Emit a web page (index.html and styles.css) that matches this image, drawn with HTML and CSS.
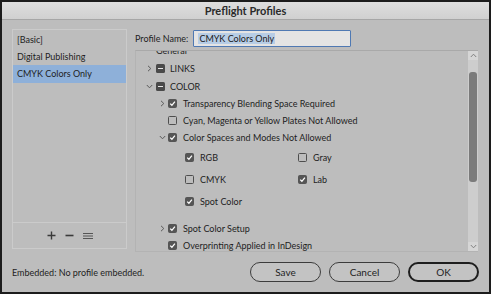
FILE: index.html
```html
<!DOCTYPE html>
<html>
<head>
<meta charset="utf-8">
<link rel="stylesheet" href="styles.css">
</head>
<body>
<div class="window">
  <div class="titlebar">Preflight Profiles</div>
  <div class="content">
    <div class="listpanel">
      <div class="items">
        <div class="item">[Basic]</div>
        <div class="item">Digital Publishing</div>
        <div class="item selected">CMYK Colors Only</div>
      </div>
      <div class="listtools">
        <svg width="9" height="9" viewBox="0 0 9 9"><path d="M4.5 0.5v8M0.5 4.5h8" stroke="#3a3a3a" stroke-width="1.4"/></svg>
        <svg width="9" height="9" viewBox="0 0 9 9"><path d="M0.5 4.5h8" stroke="#3a3a3a" stroke-width="1.6"/></svg>
        <svg width="10" height="9" viewBox="0 0 10 9"><path d="M0 2.5h10M0 5h10M0 7.5h10" stroke="#555" stroke-width="1"/></svg>
      </div>
    </div>
    <div class="rightcol">
      <div class="namerow">
        <span class="namelabel">Profile Name:</span>
        <div class="nameinput"><span class="sel">CMYK Colors Only</span></div>
      </div>
      <div class="tree">
        <div class="treeview">
          <div class="rows">
            <div class="row lv0 tall"><span class="chev"></span><span class="label">General</span></div>
            <div class="row lv0 tall"><span class="chev"><svg width="5" height="7" viewBox="0 0 5 7"><path d="M1 0.8l2.8 2.7L1 6.2" fill="none" stroke="#5a5a5a" stroke-width="1"/></svg></span><span class="cat"></span><span class="label">LINKS</span></div>
            <div class="row lv0 tall"><span class="chev"><svg width="7" height="5" viewBox="0 0 7 5"><path d="M0.8 1l2.7 2.8L6.2 1" fill="none" stroke="#5a5a5a" stroke-width="1"/></svg></span><span class="cat"></span><span class="label">COLOR</span></div>
            <div class="row lv1"><span class="chev"><svg width="5" height="7" viewBox="0 0 5 7"><path d="M1 0.8l2.8 2.7L1 6.2" fill="none" stroke="#5a5a5a" stroke-width="1"/></svg></span><span class="cb on"><svg width="9" height="9" viewBox="0 0 9 9"><path d="M2.2 4.6l1.7 1.7 3-3.6" fill="none" stroke="#fff" stroke-width="1.3"/></svg></span><span class="label">Transparency Blending Space Required</span></div>
            <div class="row lv1"><span class="chev"></span><span class="cb"></span><span class="label">Cyan, Magenta or Yellow Plates Not Allowed</span></div>
            <div class="row lv1"><span class="chev"><svg width="7" height="5" viewBox="0 0 7 5"><path d="M0.8 1l2.7 2.8L6.2 1" fill="none" stroke="#5a5a5a" stroke-width="1"/></svg></span><span class="cb on"><svg width="9" height="9" viewBox="0 0 9 9"><path d="M2.2 4.6l1.7 1.7 3-3.6" fill="none" stroke="#fff" stroke-width="1.3"/></svg></span><span class="label">Color Spaces and Modes Not Allowed</span></div>
            <div class="subgrid">
              <div class="opt"><span class="cb on"><svg width="9" height="9" viewBox="0 0 9 9"><path d="M2.2 4.6l1.7 1.7 3-3.6" fill="none" stroke="#fff" stroke-width="1.3"/></svg></span><span class="label">RGB</span></div>
              <div class="opt"><span class="cb"></span><span class="label">Gray</span></div>
              <div class="opt"><span class="cb"></span><span class="label">CMYK</span></div>
              <div class="opt"><span class="cb on"><svg width="9" height="9" viewBox="0 0 9 9"><path d="M2.2 4.6l1.7 1.7 3-3.6" fill="none" stroke="#fff" stroke-width="1.3"/></svg></span><span class="label">Lab</span></div>
              <div class="opt"><span class="cb on"><svg width="9" height="9" viewBox="0 0 9 9"><path d="M2.2 4.6l1.7 1.7 3-3.6" fill="none" stroke="#fff" stroke-width="1.3"/></svg></span><span class="label">Spot Color</span></div>
            </div>
            <div class="row lv1"><span class="chev"><svg width="5" height="7" viewBox="0 0 5 7"><path d="M1 0.8l2.8 2.7L1 6.2" fill="none" stroke="#5a5a5a" stroke-width="1"/></svg></span><span class="cb on"><svg width="9" height="9" viewBox="0 0 9 9"><path d="M2.2 4.6l1.7 1.7 3-3.6" fill="none" stroke="#fff" stroke-width="1.3"/></svg></span><span class="label">Spot Color Setup</span></div>
            <div class="row lv1"><span class="chev"></span><span class="cb on"><svg width="9" height="9" viewBox="0 0 9 9"><path d="M2.2 4.6l1.7 1.7 3-3.6" fill="none" stroke="#fff" stroke-width="1.3"/></svg></span><span class="label">Overprinting Applied in InDesign</span></div>
          </div>
        </div>
        <div class="scrollbar">
          <div class="sbtn"><svg width="7" height="5" viewBox="0 0 7 5"><path d="M0.8 4L3.5 1.2 6.2 4" fill="none" stroke="#777" stroke-width="0.9"/></svg></div>
          <div class="track"><div class="thumb"></div></div>
          <div class="sbtn"><svg width="7" height="5" viewBox="0 0 7 5"><path d="M0.8 1L3.5 3.8 6.2 1" fill="none" stroke="#777" stroke-width="0.9"/></svg></div>
        </div>
      </div>
    </div>
  </div>
  <div class="footer">
    <span class="embedded">Embedded: No profile embedded.</span>
    <div class="buttons">
      <button class="btn">Save</button>
      <button class="btn">Cancel</button>
      <button class="btn default">OK</button>
    </div>
  </div>
</div>
</body>
</html>
```
FILE: styles.css
```css
* { box-sizing: border-box; }
html, body { margin: 0; padding: 0; background: #2a2a2a; }
body { font-family: Lato, "Open Sans", sans-serif; font-size: 9px; color: #1e1e1e; }

.window {
  width: 491px;
  height: 294px;
  border: 2px solid #1c1c1c;
  background: #bdbdbd;
  display: flex;
  flex-direction: column;
  overflow: hidden;
}

.titlebar {
  height: 18px;
  flex: none;
  background: linear-gradient(#dedede, #d0d0d0);
  border-bottom: 1px solid #a6a6a6;
  text-align: center;
  font-weight: bold;
  font-size: 11px;
  line-height: 17px;
  color: #2a2a2a;
}

.content {
  display: flex;
  align-items: flex-start;
  gap: 8px;
  padding: 10px 11px 0 10px;
  height: 232px;
  flex: none;
}

.listpanel {
  width: 115px;
  height: 220px;
  border: 1px solid #cbcbcb;
  display: flex;
  flex-direction: column;
  margin-top: -1px;
}
.items { flex: 1; padding-top: 1px; }
.item {
  height: 17px;
  line-height: 17px;
  padding-left: 4px;
  white-space: nowrap;
}
.item.selected { background: #8eb0d9; height: 18px; line-height: 18px; }
.listtools {
  height: 26px;
  border-top: 1px solid #cbcbcb;
  display: flex;
  justify-content: center;
  align-items: center;
  gap: 9px;
  padding-bottom: 1px;
}

.rightcol {
  flex: 1;
  align-self: stretch;
  display: flex;
  flex-direction: column;
  gap: 3px;
}
.namerow {
  height: 17px;
  display: flex;
  align-items: center;
  gap: 5px;
}
.namelabel { white-space: nowrap; }
.nameinput {
  width: 158px;
  height: 17px;
  border: 1px solid #4f79b3;
  background: #e4e4e4;
  border-radius: 1px;
  padding: 2px 0 0 4px;
  line-height: 11px;
}
.sel { background: #b7cde6; color: #1a1a1a; padding: 0 1px; }

.tree {
  flex: 1;
  display: flex;
  border-top: 1px solid #a9a9a9;
  border-left: 1px solid #b3b3b3;
  border-bottom: 1px solid #b3b3b3;
  overflow: hidden;
}
.treeview { flex: 1; overflow: hidden; }
.rows { margin-top: -10px; }
.row {
  height: 17px;
  display: flex;
  align-items: center;
  white-space: nowrap;
}
.row.tall { height: 18px; }
.row.lv0 { padding-left: 9px; }
.row.lv1 { padding-left: 21px; }
.chev {
  width: 10px;
  display: flex;
  align-items: center;
  justify-content: center;
  margin-right: 1px;
}
.lv0 .chev { width: 8px; margin-right: 3px; }
.cat {
  width: 9px;
  height: 9px;
  background: #4a4a4a;
  border-radius: 1.5px;
  margin-right: 5px;
  position: relative;
}
.cat::after {
  content: "";
  position: absolute;
  left: 2px;
  top: 4px;
  width: 5px;
  height: 1.5px;
  background: #e8e8e8;
}
.cb {
  width: 9px;
  height: 9px;
  border: 1px solid #4e4e4e;
  border-radius: 1.5px;
  margin-right: 6px;
  flex: none;
  display: flex;
}
.cb.on { background: #555; border-color: #555; }
.cb svg { margin: -1px; }

.subgrid {
  display: grid;
  grid-template-columns: 113px auto;
  grid-auto-rows: 22px;
  padding: 0 0 8px 49px;
}
.opt { display: flex; align-items: center; }
.opt .cb { margin-right: 6px; }

.scrollbar {
  width: 10px;
  display: flex;
  flex-direction: column;
}
.sbtn {
  height: 9px;
  background: #d6d6d6;
  display: flex;
  align-items: center;
  justify-content: center;
}
.track {
  flex: 1;
  background: #cdcdcd;
  padding: 12px 1px 0 1px;
}
.thumb {
  height: 110px;
  background: #7b7b7b;
  border-radius: 3px;
}

.footer {
  flex: 1;
  display: flex;
  align-items: center;
  justify-content: space-between;
  padding: 0 10px 0 10px;
}
.embedded { white-space: nowrap; }
.buttons { display: flex; gap: 8px; }
.btn {
  width: 71px;
  height: 20px;
  border: 1px solid #3c3c3c;
  border-radius: 10px;
  background: #c3c3c3;
  font-family: Lato, "Open Sans", sans-serif;
  font-size: 10px;
  color: #1e1e1e;
  padding: 0;
}
.btn.default { border: 2px solid #1e1e1e; }
```
